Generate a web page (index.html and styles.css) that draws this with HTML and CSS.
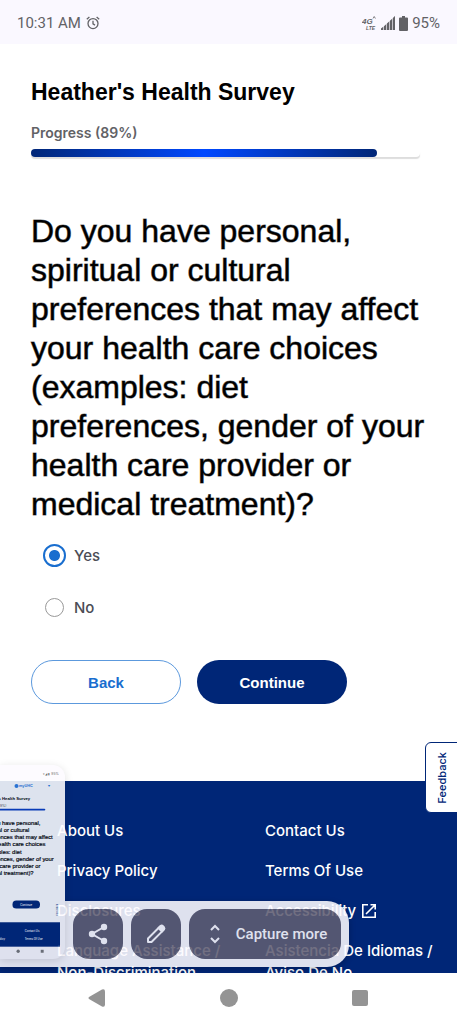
FILE: index.html
```html
<!DOCTYPE html>
<html lang="en">
<head>
<meta charset="utf-8">
<meta name="viewport" content="width=device-width, initial-scale=1">
<title>Heather's Health Survey</title>
<link rel="stylesheet" href="styles.css">
</head>
<body>
<div class="screen">
  <header class="status">
    <div class="status-group">
      <span>10:31 AM</span>
      <svg class="alarm" viewBox="0 0 14 14" width="14" height="14" fill="none" stroke="currentColor">
        <circle cx="7" cy="7.6" r="5" stroke-width="1.3"/>
        <path d="M7 4.8v3l2 1.3M.8 3.2l2.6-2.2M13.2 3.2L10.600 1" stroke-width="1.3"/>
      </svg>
    </div>
    <div class="status-group status-right">
      <svg viewBox="0 0 15 16" width="15" height="16" fill="currentColor">
        <text class="net-4g" x="0" y="9">4G</text>
        <text class="net-lte" x="4" y="15">LTE</text>
        <path d="M11 3.500l1.200-2 1.200 2" fill="none" stroke="currentColor" stroke-width=".8"/>
      </svg>
      <svg viewBox="0 0 14 14" width="14" height="14" fill="currentColor">
        <path d="M0 13L14 0v14H0z" opacity=".35"/>
        <path d="M0 12.500L2 11v3H0zM3 10.200L5 8.400V14H3zM6 7.500L8 5.700V14H6zM9 4.800L11 3V14H9zM12 2l2-2v14h-2z"/>
      </svg>
      <svg class="battery" viewBox="0 0 9 15" width="9" height="15" fill="currentColor">
        <path d="M3 0h3v1.500h2q1 0 1 1V14q0 1-1 1H1q-1 0-1-1V2.500q0-1 1-1h2z"/>
      </svg>
      <span>95%</span>
    </div>
  </header>

  <main class="survey">
    <h1 class="title">Heather's Health Survey</h1>
    <p class="progress-label" id="progress-label">Progress (89%)</p>
    <div class="progress" role="progressbar" aria-labelledby="progress-label" aria-valuenow="89" aria-valuemin="0" aria-valuemax="100">
      <div class="progress-fill" style="width:89%"></div>
    </div>
    <form class="form">
      <h2 class="question" id="question">Do you have personal, spiritual or cultural preferences that may affect your health care choices (examples: diet preferences, gender of your health care provider or medical treatment)?</h2>
      <div class="options" role="radiogroup" aria-labelledby="question">
        <label class="option"><input class="radio" type="radio" name="answer" value="yes" checked><span>Yes</span></label>
        <label class="option"><input class="radio" type="radio" name="answer" value="no"><span>No</span></label>
      </div>
      <div class="actions">
        <button class="button button-outline" type="button">Back</button>
        <button class="button button-solid" type="button">Continue</button>
      </div>
    </form>
  </main>

  <footer class="footer">
    <nav class="footer-links">
      <a class="link" href="#">About Us</a>
      <a class="link" href="#">Contact Us</a>
      <a class="link" href="#">Privacy Policy</a>
      <a class="link" href="#">Terms Of Use</a>
      <a class="link" href="#">Disclosures</a>
      <a class="link link-external" href="#">Accessibility
        <svg viewBox="0 0 14 14" width="14" height="14" fill="none" stroke="currentColor" stroke-width="1.600">
          <path d="M6 .8H.8v12.400h12.400V8M8.500.8h4.700v4.700M13 1L4 10"/>
        </svg>
      </a>
      <a class="link" href="#">Language Assistance / Non-Discrimination</a>
      <a class="link" href="#">Asistencia De Idiomas / Aviso De No</a>
    </nav>
  </footer>

  <nav class="sysnav">
    <button class="sys-button" type="button" aria-label="Back">
      <svg viewBox="0 0 18 18" width="18" height="18" fill="currentColor"><path d="M1 8Q0 9 1 10L14 17.500Q17 18.500 17 15.500V2.500Q17-.5 14 .5Z"/></svg>
    </button>
    <button class="sys-button" type="button" aria-label="Home">
      <svg viewBox="0 0 18 18" width="18" height="18" fill="currentColor"><circle cx="9" cy="9" r="9"/></svg>
    </button>
    <button class="sys-button" type="button" aria-label="Recents">
      <svg viewBox="0 0 18 18" width="18" height="18" fill="currentColor"><rect x="1" y="1" width="16" height="16" rx="2"/></svg>
    </button>
  </nav>

  <button class="feedback" type="button"><span class="feedback-text">Feedback</span></button>

  <div class="capture">
    <div class="toolbar">
      <button class="tool" type="button" aria-label="Share">
        <svg viewBox="0 0 24 24" width="24" height="24" fill="currentColor">
          <path d="M18 5L6 12l12 7" fill="none" stroke="currentColor" stroke-width="2"/>
          <circle cx="18" cy="5" r="3.200"/><circle cx="6" cy="12" r="3.200"/><circle cx="18" cy="19" r="3.200"/>
        </svg>
      </button>
      <button class="tool" type="button" aria-label="Edit">
        <svg viewBox="0 0 24 24" width="24" height="24" fill="none" stroke="currentColor" stroke-width="2" stroke-linejoin="round">
          <path d="M4 20v-3.500L16.500 4q1.300-1 2.500.2l.9.900q1 1.300 0 2.500L7.500 20z"/>
          <path d="M14.500 6L18 9.500l2-2.500-3-3z" fill="currentColor"/>
        </svg>
      </button>
      <button class="tool tool-wide" type="button">
        <svg viewBox="0 0 24 24" width="24" height="24" fill="none" stroke="currentColor" stroke-width="2">
          <path d="M8 8l4-4 4 4M8 16l4 4 4-4"/>
        </svg>
        <span>Capture more</span>
      </button>
    </div>
    <div class="thumb">
      <svg class="thumb-screen" viewBox="130 0 327 1023" width="60" height="188">
        <rect class="t-bg" x="130" y="66" width="327" height="774"/>
        <text class="t-small" x="362" y="40">▾ ◢ ▮ 95%</text>
        <g class="t-blue"><circle cx="220" cy="97" r="11"/><text class="t-label" x="234" y="105">myUHC</text><text class="t-label" x="392" y="104">▾</text></g>
        <text class="t-title" x="31" y="174">Heather's Health Survey</text>
        <text class="t-small" x="31" y="210">Progress (89%)</text>
        <rect class="t-bar" x="31" y="221" width="346" height="10" rx="5"/>
        <g class="t-question">
          <text x="31" y="310">Do you have personal,</text>
          <text x="31" y="349">spiritual or cultural</text>
          <text x="31" y="388">preferences that may affect</text>
          <text x="31" y="427">your health care choices</text>
          <text x="31" y="466">(examples: diet</text>
          <text x="31" y="505">preferences, gender of your</text>
          <text x="31" y="544">health care provider or</text>
          <text x="31" y="583">medical treatment)?</text>
        </g>
        <rect class="t-navy" x="198" y="722" width="150" height="43" rx="21"/>
        <text class="t-link" x="240" y="749">Continue</text>
        <text class="t-feedback" transform="translate(446 804) rotate(-90)">Feedback</text>
        <rect class="t-navy" x="130" y="840" width="327" height="133"/>
        <text class="t-link" x="57" y="936">Privacy Policy</text>
        <text class="t-link" x="265" y="894">Contact Us</text>
        <text class="t-link" x="265" y="936">Terms Of Use</text>
        <circle class="t-nav" cx="229" cy="998" r="9"/>
        <rect class="t-nav" x="352" y="990" width="16" height="16"/>
      </svg>
    </div>
  </div>
</div>
</body>
</html>
```
FILE: styles.css
```css
* {
  box-sizing: border-box;
}

body {
  margin: 0;
  background: #fff;
  font-family: Inter, "Liberation Sans", sans-serif;
}

button {
  margin: 0;
  padding: 0;
  border: 0;
  font: inherit;
  cursor: pointer;
}

svg {
  display: block;
  flex: none;
}

.screen {
  position: relative;
  display: flex;
  flex-direction: column;
  height: 100vh;
  overflow: hidden;
}

.status {
  display: flex;
  justify-content: space-between;
  align-items: center;
  height: 44px;
  padding: 2px 17px 0;
  background: #faf8ff;
  color: #626266;
  font: 15px Roboto, sans-serif;
}

.status-group {
  display: flex;
  align-items: center;
  gap: 5px;
}

.status-right {
  gap: 4px;
}

.net-4g {
  font: italic bold 8px "Liberation Sans", sans-serif;
}

.net-lte {
  font: italic bold 5px "Liberation Sans", sans-serif;
}

.survey {
  padding: 34px 31px 77px;
}

.title {
  margin: 0;
  color: #000;
  font: bold 23px/28px "Liberation Sans", sans-serif;
}

.progress-label {
  margin: 17px 0 6px;
  color: #626266;
  font-size: 14px;
  font-weight: 600;
  line-height: 20px;
}

.progress {
  height: 8px;
  margin-right: 6px;
  border-radius: 4px;
  box-shadow: 0 2px 1px #ddd;
}

.progress-fill {
  height: 8px;
  border-radius: 4px;
  background: linear-gradient(90deg, #002677, #0048ff 50%, #002677);
}

.question {
  margin: 55px 0 0;
  color: #000;
  font: 32px/39px "Liberation Sans", sans-serif;
  -webkit-text-stroke: 1px #0008;
}

.options {
  display: flex;
  flex-direction: column;
  gap: 28px;
  padding: 19px 12px 0;
}

.option {
  display: flex;
  align-items: center;
  gap: 8px;
  height: 24px;
  color: #4b4d55;
  font-size: 15px;
  font-weight: 500;
}

.radio {
  appearance: none;
  flex: none;
  width: 19px;
  height: 19px;
  margin: 2px;
  border: 1px solid #999;
  border-radius: 50%;
  background: #fff;
}

.radio:checked {
  width: 23px;
  height: 23px;
  margin: 0;
  border: 2px solid #196ecf;
  background: radial-gradient(circle, #196ecf 5px, #fff 6px);
}

.actions {
  display: flex;
  gap: 16px;
  margin-top: 41px;
}

.button {
  width: 150px;
  height: 44px;
  border-radius: 22px;
  font: bold 15px "Liberation Sans", sans-serif;
}

.button-outline {
  border: 1px solid #5c99dd;
  background: #fff;
  color: #196ecf;
}

.button-solid {
  background: #002677;
  color: #fff;
}

.footer {
  flex: 1 1 0;
  min-height: 0;
  overflow: hidden;
  background: #002677;
}

.footer-links {
  display: grid;
  grid-template-columns: 1fr 1fr;
  gap: 18px 16px;
  padding: 39px 0 0 57px;
}

.link {
  color: #fff;
  font-size: 15px;
  font-weight: 500;
  line-height: 22px;
  text-decoration: none;
}

.link-external {
  display: flex;
  align-items: center;
  gap: 6px;
}

.sysnav {
  display: flex;
  justify-content: space-between;
  align-items: center;
  height: 50px;
  padding: 0 88px;
  background: #fff;
}

.sys-button {
  background: none;
  color: #949494;
}

.feedback {
  position: absolute;
  right: -1px;
  bottom: 210px;
  display: grid;
  place-items: center;
  width: 33px;
  height: 71px;
  border: 1px solid #002677;
  border-radius: 6px 0 0 6px;
  background: #fff;
  color: #002677;
  font-size: 11px;
  font-weight: 500;
}

.feedback-text {
  writing-mode: vertical-rl;
  rotate: 180deg;
}

.capture {
  position: absolute;
  left: 0;
  bottom: 56px;
  display: grid;
  align-items: end;
  justify-items: start;
  opacity: .88;
}

.toolbar {
  grid-area: 1 / 1;
  display: flex;
  gap: 8px;
  padding: 8px 8px 8px 73px;
  border-radius: 0 22px 22px 0;
  background: #fdfbff;
  box-shadow: 0 2px 6px #0004;
}

.tool {
  display: flex;
  align-items: center;
  justify-content: center;
  width: 50px;
  height: 50px;
  border-radius: 16px;
  background: #5f5d72;
  color: #fdfbff;
}

.tool-wide {
  gap: 9px;
  width: 152px;
  font: 500 15px Roboto, sans-serif;
}

.thumb {
  grid-area: 1 / 1;
  width: 65px;
  margin-bottom: 8px;
  padding: 3px 5px 3px 0;
  border-radius: 0 12px 12px 0;
  background: #fdfbff;
  box-shadow: 0 2px 8px #0002;
}

.thumb-screen {
  font-family: Inter, sans-serif;
}

.t-bg {
  fill: #fcfeff;
}

.t-small {
  font-size: 18px;
  fill: #555;
}

.t-blue {
  fill: #2f7de0;
}

.t-label {
  font-size: 20px;
  font-weight: 700;
}

.t-title {
  font: bold 23px "Liberation Sans", sans-serif;
}

.t-bar {
  fill: #0a3ec0;
}

.t-question {
  font: 32px "Liberation Sans", sans-serif;
  stroke: #000;
  stroke-width: 1px;
}

.t-navy {
  fill: #002677;
}

.t-link {
  font-size: 15px;
  font-weight: 500;
  fill: #fff;
}

.t-feedback {
  font-size: 14px;
  fill: #002677;
}

.t-nav {
  fill: #777;
}
```
